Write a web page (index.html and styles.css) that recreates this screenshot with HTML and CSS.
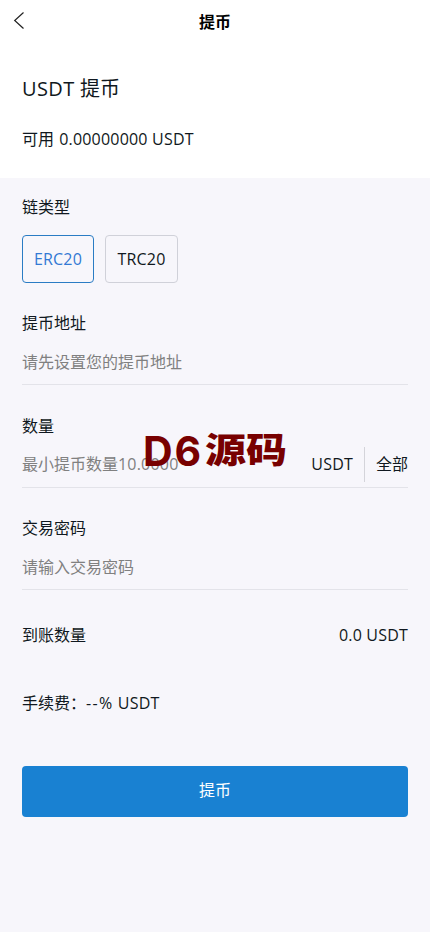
FILE: index.html
```html
<!DOCTYPE html>
<html lang="zh-CN">
<head>
<meta charset="utf-8">
<meta name="viewport" content="width=device-width, initial-scale=1">
<title>提币</title>
<link rel="stylesheet" href="styles.css">
</head>
<body>
<header class="navbar">
  <svg class="back" width="12" height="20" viewBox="0 0 12 20" fill="none" stroke="#222" stroke-width="1.2"><path d="M10.5 2.5 1.7 10.5l8.8 8"/></svg>
  <h1 class="nav-title">提币</h1>
</header>
<section class="summary">
  <h2 class="coin"><span class="latin">USDT</span> 提币</h2>
  <p class="available">可用 <span class="latin">0.00000000 USDT</span></p>
</section>
<main class="form">
  <div class="label">链类型</div>
  <div class="chains">
    <button class="chain active">ERC20</button>
    <button class="chain">TRC20</button>
  </div>
  <div class="field">
    <div class="label">提币地址</div>
    <div class="entry"><span class="hint">请先设置您的提币地址</span></div>
  </div>
  <div class="field">
    <div class="label">数量</div>
    <div class="entry"><span class="hint">最小提币数量<span class="latin">10.0000</span></span><span class="unit">USDT</span><span class="all">全部</span></div>
  </div>
  <div class="field">
    <div class="label">交易密码</div>
    <div class="entry"><span class="hint">请输入交易密码</span></div>
  </div>
  <div class="row received"><span>到账数量</span><span class="latin">0.0 USDT</span></div>
  <div class="row fee"><span>手续费：<span class="rate">--%</span><span class="latin"> USDT</span></span></div>
  <button class="submit">提币</button>
</main>
<div class="watermark"><span class="mark-latin">D6</span><span class="mark-cjk">源码</span></div>
</body>
</html>
```
FILE: styles.css
```css
* { box-sizing: border-box; }
body {
  margin: 0;
  position: relative;
  height: 932px;
  overflow: hidden;
  background: #f7f6fb;
  color: #101820;
  font: 400 16px/24px "Open Sans", "Noto Sans CJK SC", sans-serif;
}
h1, h2, p { margin: 0; font-weight: inherit; }
button { font: inherit; color: inherit; padding: 0; }
.latin { letter-spacing: .2px; }
.rate { letter-spacing: 1.3px; }
.navbar {
  height: 44px;
  background: #fff;
  display: grid;
  grid-template-columns: 44px 1fr 44px;
  align-items: center;
}
.back { margin: -4px 0 0 13px; }
.nav-title { font-size: 16px; font-weight: 700; text-align: center; color: #000; }
.summary { height: 134px; background: #fff; padding: 30px 22px 0; }
.coin { font-size: 20px; line-height: 30px; }
.coin .latin { letter-spacing: .4px; }
.available { margin-top: 23px; }
.available .latin { margin-left: 1px; }
.form { padding: 17px 22px 0; }
.chains { display: flex; gap: 11px; margin: 16px 0 28px; }
.chain {
  width: 73px;
  height: 48px;
  border: 1px solid #d0d1d9;
  border-radius: 4px;
  background: transparent;
  letter-spacing: .2px;
}
.chain.active { width: 72px; border-color: #2a7cc4; color: #3379d4; }
.field { height: 102.5px; }
.entry {
  height: 50px;
  padding: 9px 0 5px;
  display: flex;
  align-items: center;
  border-bottom: 1px solid #e3e3e9;
}
.hint { color: #808080; flex: 1; }
.unit { padding-right: 11px; margin-right: 11px; line-height: 35px; border-right: 1px solid #d4d4da; letter-spacing: .2px; }
.row { display: flex; justify-content: space-between; }
.received { margin-top: 4px; }
.fee { margin-top: 44px; }
.submit {
  display: block;
  width: 100%;
  height: 51px;
  margin-top: 51px;
  padding-bottom: 3px;
  border: 0;
  border-radius: 4px;
  background: #1981d2;
  color: #fff;
}
.watermark {
  position: absolute;
  left: 143px;
  top: 426px;
  display: flex;
  color: #780000;
  font-weight: 900;
  line-height: 50px;
  white-space: nowrap;
}
.mark-latin { font-family: Inter, sans-serif; font-weight: 700; font-size: 41px; letter-spacing: 2px; width: 62px; }
.mark-cjk { font-family: "Noto Sans CJK SC", sans-serif; font-size: 41px; transform: translateY(-3px) scaleY(.86); }
```
